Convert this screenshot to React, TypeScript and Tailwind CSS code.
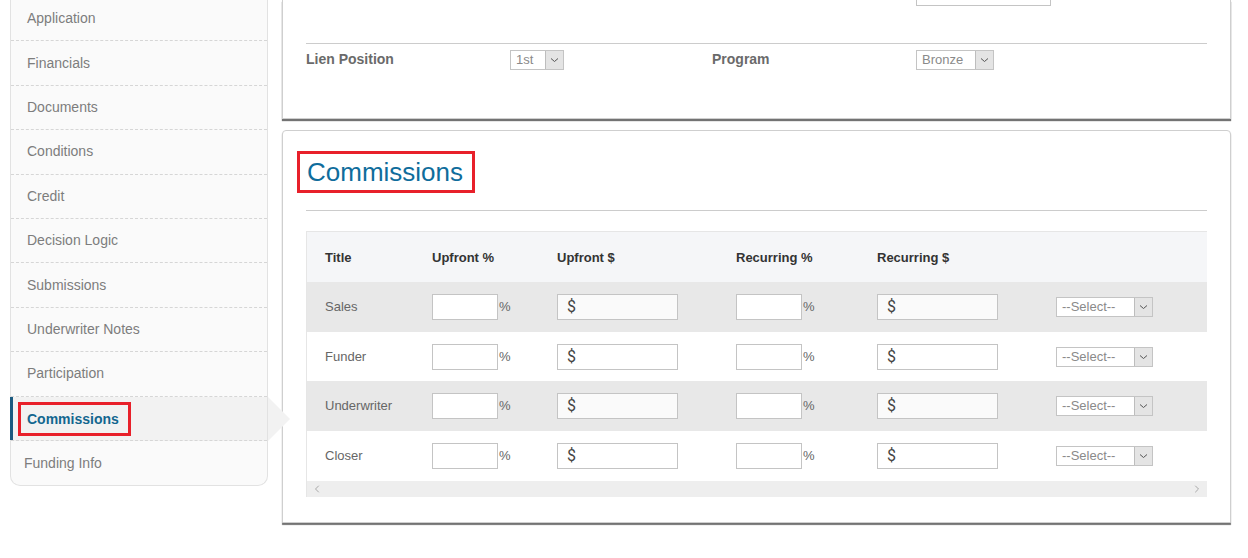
import { ChevronLeft, ChevronRight } from "lucide-react";

const navItems = [
  "Application",
  "Financials",
  "Documents",
  "Conditions",
  "Credit",
  "Decision Logic",
  "Submissions",
  "Underwriter Notes",
  "Participation",
  "Commissions",
  "Funding Info",
];

const rows = ["Sales", "Funder", "Underwriter", "Closer"];

function Chevron() {
  return (
    <svg width="9" height="6" viewBox="0 0 9 6" fill="none">
      <path d="M1 1.5 L4.5 4.5 L8 1.5" stroke="#555" strokeWidth="1" />
    </svg>
  );
}

// mock dropdown so the little grey button looks like the old IE one
function FakeSelect({ label, width }: { label: string; width: string }) {
  return (
    <div className={`flex h-[20px] ${width} border border-[#c4c4c4] bg-white`}>
      <div className="flex-1 pl-[5px] text-[13px] leading-[18px] text-[#8a8a8a]">{label}</div>
      <div className="flex w-[18px] items-center justify-center border-l border-[#bdbdbd] bg-[#e4e4e4]">
        <Chevron />
      </div>
    </div>
  );
}

function MoneyInput({ grey }: { grey: boolean }) {
  return (
    <div
      className={`flex h-[26px] w-[121px] items-center border border-[#c4c4c4] pl-[9px] font-['Roboto',Arial,sans-serif] text-[16px] text-[#444] ${
        grey ? "bg-[#fafafa]" : "bg-white"
      }`}
    >
      $
    </div>
  );
}

function PercentInput() {
  return (
    <div className="flex items-center">
      <input className="h-[26px] w-[66px] border border-[#c4c4c4] bg-white outline-none" />
      <span className="ml-px text-[13px] text-[#666]">%</span>
    </div>
  );
}

export default function App() {
  return (
    <div className="flex h-[558px] w-[1248px] gap-[14px] overflow-hidden bg-white pl-[10px] font-['Liberation_Sans',Arial,sans-serif]">
      {/* Sidebar */}
      <div className="relative -mt-[3px] w-[258px] self-start rounded-b-[10px] border border-t-0 border-[#e2e2e2] bg-[#fafafa]">
        {navItems.map((item, i) => {
          const active = item === "Commissions";
          const last = i === navItems.length - 1;
          return (
            <div
              key={item}
              className={`relative flex h-[44.4px] items-center text-[14px] ${
                last ? "pl-[13px]" : "border-b border-dashed border-[#d6d6d6] pl-[16px]"
              } ${active ? "bg-[#f2f2f2] font-bold text-[#12668f]" : "text-[#7d7d7d]"}`}
            >
              {active && (
                <>
                  <div className="absolute -left-px top-0 bottom-0 w-[3px] bg-[#1b5a80]" />
                  <div className="absolute -right-[23px] top-0 h-0 w-0 border-y-[22px] border-l-[22px] border-y-transparent border-l-[#f2f2f2]" />
                  <div className="-ml-[9px] mt-[1px] border-[3px] border-[#e8202a] pl-[6px] pr-[9px] leading-[28px]">
                    {item}
                  </div>
                </>
              )}
              {!active && item}
            </div>
          );
        })}
      </div>

      {/* Main column */}
      <div className="flex w-[949px] flex-col gap-[11px]">
        {/* Loan panel */}
        <div className="border border-t-0 border-[#cfcfcf] bg-white px-[23px] shadow-[0_2px_1px_rgba(0,0,0,0.55)]">
          <div className="grid h-[44px] grid-cols-[204px_202px_204px_1fr] border-b border-[#cccccc]">
            <div />
            <div />
            <div />
            <div className="h-[6px] w-[135px] border-x border-b border-[#c4c4c4]" />
          </div>
          <div className="grid h-[31px] grid-cols-[204px_202px_204px_1fr] items-center text-[14px]">
            <div className="font-bold text-[#6a6a6a]">Lien Position</div>
            <FakeSelect label="1st" width="w-[54px]" />
            <div className="font-bold text-[#6a6a6a]">Program</div>
            <FakeSelect label="Bronze" width="w-[78px]" />
          </div>
          <div className="h-[43px]" />
        </div>

        {/* Commissions panel */}
        <div className="rounded-t-[4px] border border-[#cfcfcf] bg-white px-[23px] pt-[20px] pb-[25px] shadow-[0_2px_1px_rgba(0,0,0,0.55)]">
          <div className="-ml-[9px]">
            <div className="inline-block border-[3px] border-[#e8202a] pl-[7px] pr-[9px] text-[26px] leading-[36px] text-[#0f6d9c]">
              Commissions
            </div>
          </div>
          <div className="mt-[17px] border-t border-[#cccccc]" />

          <div className="mt-[20px] border-l border-t border-[#e6e6e6]">
            <div className="grid h-[50px] grid-cols-[107px_125px_179px_141px_179px_1fr] items-center bg-[#f5f6f8] pl-[18px] pt-px text-[13px] font-bold text-[#333]">
              <div>Title</div>
              <div>Upfront %</div>
              <div>Upfront $</div>
              <div>Recurring %</div>
              <div>Recurring $</div>
              <div />
            </div>
            {rows.map((r, i) => {
              const grey = i % 2 === 0;
              return (
                <div
                  key={r}
                  className={`grid grid-cols-[107px_125px_179px_141px_179px_1fr] items-center pl-[18px] text-[13px] text-[#666] ${
                    grey ? "h-[50px] bg-[#e8e8e8]" : "h-[49px] bg-white"
                  }`}
                >
                  <div>{r}</div>
                  <PercentInput />
                  <div>
                    <MoneyInput grey={grey} />
                  </div>
                  <PercentInput />
                  <div>
                    <MoneyInput grey={grey} />
                  </div>
                  <div>
                    <FakeSelect label="--Select--" width="w-[97px]" />
                  </div>
                </div>
              );
            })}
            <div className="mt-px flex h-[16px] items-center justify-between bg-[#eeeeee] px-[4px] text-[#a8a8a8]">
              <ChevronLeft size={12} strokeWidth={2} />
              <ChevronRight size={12} strokeWidth={2} />
            </div>
          </div>
        </div>
      </div>
    </div>
  );
}
